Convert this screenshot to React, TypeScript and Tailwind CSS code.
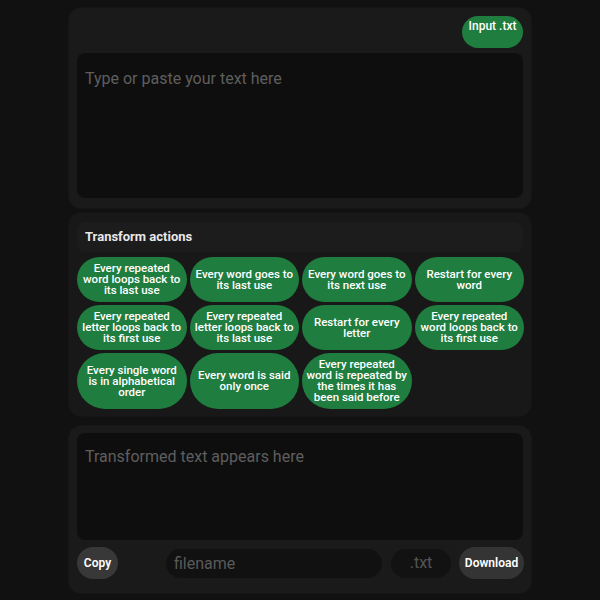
import React from 'react';

const actions = [
  'Every repeated word loops back to its last use',
  'Every word goes to its last use',
  'Every word goes to its next use',
  'Restart for every word',
  'Every repeated letter loops back to its first use',
  'Every repeated letter loops back to its last use',
  'Restart for every letter',
  'Every repeated word loops back to its first use',
  'Every single word is in alphabetical order',
  'Every word is said only once',
  'Every repeated word is repeated by the times it has been said before',
];

export default function App() {
  return (
    <div
      className="min-h-screen bg-[#111111] flex justify-center"
      style={{ fontFamily: 'Roboto, "Noto Sans", sans-serif' }}
    >
      <div className="w-[462px] pt-2 flex flex-col">
        {/* Input */}
        <section className="rounded-xl bg-[#1a1a1a] px-2 pt-2 pb-[10px] shadow-[0_0_0_1px_#161616]">
          <div className="flex justify-end">
            <button className="h-8 w-[61px] rounded-full bg-[#1f7d3f] text-white text-[12px] font-medium leading-none pt-[4px] flex justify-center items-start">
              Input .txt
            </button>
          </div>
          <textarea
            className="mt-[5px] block w-[446px] h-[145px] rounded-lg bg-[#0e0e0e] resize-none outline-none px-2 pt-[14px] text-[16px] leading-6 text-gray-200 placeholder:text-[#5e5e5e]"
            placeholder="Type or paste your text here"
          />
        </section>

        {/* Actions */}
        <section className="mt-[5px] rounded-xl bg-[#181818] px-2 pt-[9px] pb-[7px] shadow-[0_0_0_1px_#151515]">
          <div className="h-[30px] rounded-lg bg-[#1c1c1c] px-2 flex items-center">
            <h2 className="text-[13px] font-bold text-[#e8e8e8]">Transform actions</h2>
          </div>
          <div className="mt-[5px] grid grid-cols-4 gap-[3px] w-[447px]">
            {actions.map((a, i) => (
              <button
                key={a}
                className={
                  'rounded-full bg-[#1f7d3f] text-white text-[11.5px] font-medium leading-[11px] px-1 flex items-center justify-center text-center ' +
                  (i >= 8 ? 'h-[56px]' : 'h-[45px]')
                }
              >
                {a}
              </button>
            ))}
          </div>
        </section>

        {/* Output */}
        <section className="mt-[10px] rounded-xl bg-[#1a1a1a] px-2 pt-[7px] pb-[14px] shadow-[0_0_0_1px_#161616]">
          <textarea
            className="block w-[446px] h-[107px] rounded-lg bg-[#0e0e0e] resize-none outline-none px-2 pt-3 text-[16px] leading-6 text-gray-200 placeholder:text-[#5e5e5e]"
            placeholder="Transformed text appears here"
            readOnly
          />
          <div className="mt-[7px] flex items-center w-[447px]">
            <button className="h-8 w-[41px] rounded-full bg-[#383838] text-white text-[12px] font-semibold">
              Copy
            </button>
            <input
              className="ml-auto h-[29px] w-[216px] rounded-full bg-[#111111] outline-none px-2 text-[16px] text-gray-200 placeholder:text-[#5a5a5a]"
              placeholder="filename"
            />
            <div className="ml-[9px] h-[29px] w-[60px] rounded-full bg-[#121212] flex items-center justify-center text-[16px] text-[#555555]">
              .txt
            </div>
            <button className="ml-2 h-8 w-[65px] rounded-full bg-[#343434] text-white text-[12px] font-semibold">
              Download
            </button>
          </div>
        </section>
      </div>
    </div>
  );
}
